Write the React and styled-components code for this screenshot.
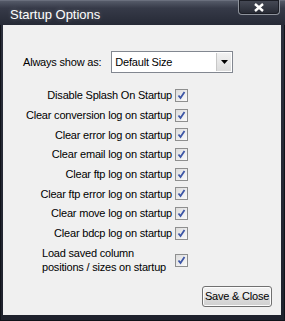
import React from 'react';
import styled, { createGlobalStyle } from 'styled-components';

const Global = createGlobalStyle`
  html, body { margin: 0; padding: 0; background: #1b1d27; }
  body { font-family: 'Liberation Sans', Arial, sans-serif; }
`;

const Window = styled.div({
  width: '285px',
  height: '321px',
  display: 'flex',
  flexDirection: 'column',
  background: 'linear-gradient(#2c303d, #1f222d)',
  boxShadow: 'inset 1px 0 0 #11131a, inset -1px 0 0 #11131a, inset 0 -1px 0 #11131a',
  overflow: 'hidden',
});

const TitleBar = styled.div({
  height: '24px',
  flexShrink: 0,
  display: 'flex',
  alignItems: 'flex-start',
  justifyContent: 'space-between',
  background: 'linear-gradient(#555a68 0, #363a48 30%, #262a36 100%)',
  borderTop: '1px solid #6a6f7d',
});

const Title = styled.span({
  fontFamily: "'Liberation Sans', Arial, sans-serif",
  fontSize: '13px',
  color: '#ffffff',
  marginLeft: '10px',
  marginTop: '6px',
  textShadow: '0 0 4px rgba(255,255,255,0.25)',
});

const CloseButton = styled.div({
  width: '40px',
  height: '14px',
  marginRight: '5px',
  marginTop: '-1px',
  display: 'flex',
  alignItems: 'center',
  justifyContent: 'center',
  border: '1px solid #8f939c',
  borderTop: 'none',
  borderRadius: '0 0 4px 4px',
  background: 'linear-gradient(#474b57, #262933)',
  boxShadow: 'inset 0 0 0 1px #1b1d25',
});

const Body = styled.div({
  flex: 1,
  margin: '0 4px 6px 3px',
  background: '#f0f0f0',
  fontSize: '11px',
  letterSpacing: '-0.2px',
  color: '#000',
  padding: '26px 9px 0 20px',
  display: 'flex',
  flexDirection: 'column',
});

const ShowRow = styled.div({
  display: 'flex',
  alignItems: 'center',
  gap: '10px',
  height: '22px',
});

const Select = styled.div({
  width: '122px',
  height: '22px',
  boxSizing: 'border-box',
  border: '1px solid #828790',
  background: '#fff',
  display: 'flex',
  alignItems: 'stretch',
});

const SelectText = styled.span({
  flex: 1,
  paddingLeft: '3px',
  display: 'flex',
  alignItems: 'center',
});

const SelectArrow = styled.div({
  width: '14px',
  margin: '1px',
  background: 'linear-gradient(#f2f2f2, #dcdcdc)',
  borderLeft: '1px solid #c8c8c8',
  display: 'flex',
  alignItems: 'center',
  justifyContent: 'center',
});

const CheckList = styled.div({
  width: '165px',
  marginTop: '12.5px',
  display: 'flex',
  flexDirection: 'column',
});

const CheckRow = styled.label({
  height: '19.7px',
  display: 'flex',
  alignItems: 'center',
  justifyContent: 'flex-end',
  gap: '3px',
  whiteSpace: 'nowrap',
});

const BoxFrame = styled.span({
  width: '13px',
  height: '13px',
  boxSizing: 'border-box',
  flexShrink: 0,
  border: '1px solid #8e8f8f',
  background: 'linear-gradient(135deg, #dcdcdc, #fbfbfb)',
  display: 'flex',
});

const LoadRow = styled.div({
  display: 'flex',
  alignItems: 'center',
  width: '165px',
  height: '28px',
  marginTop: '3px',
  paddingLeft: '19px',
  boxSizing: 'border-box',
  justifyContent: 'space-between',
});

const LoadText = styled.span({
  lineHeight: '14px',
});

const Footer = styled.div({
  display: 'flex',
  justifyContent: 'flex-end',
  marginTop: '11.5px',
});

const Button = styled.button({
  width: '70px',
  height: '21px',
  padding: 0,
  fontFamily: "'Liberation Sans', Arial, sans-serif",
  fontSize: '11px',
  letterSpacing: '-0.2px',
  color: '#000',
  border: '1px solid #707070',
  borderRadius: '3px',
  background: 'linear-gradient(#f2f2f2 0, #ebebeb 50%, #dddddd 51%, #cfcfcf 100%)',
  boxShadow: 'inset 0 0 0 1px #fcfcfc',
});

const Check = () => (
  <BoxFrame>
    <svg width="11" height="11" viewBox="0 0 11 11">
      <path d="M2.5 5.5 L4.5 8 L8.5 2" fill="none" stroke="#3d56a6" strokeWidth="1.8" />
    </svg>
  </BoxFrame>
);

const options = [
  'Disable Splash On Startup',
  'Clear conversion log on startup',
  'Clear error log on startup',
  'Clear email log on startup',
  'Clear ftp log on startup',
  'Clear ftp error log on startup',
  'Clear move log on startup',
  'Clear bdcp log on startup',
];

export default function App() {
  return (
    <Window>
      <Global />
      <TitleBar>
        <Title>Startup Options</Title>
        <CloseButton>
          <svg width="12" height="9" viewBox="0 0 12 9">
            <path d="M2 1 L10 8 M10 1 L2 8" stroke="#fff" strokeWidth="2.4" />
          </svg>
        </CloseButton>
      </TitleBar>
      <Body>
        <ShowRow>
          <span>Always show as:</span>
          <Select>
            <SelectText>Default Size</SelectText>
            <SelectArrow>
              <svg width="7" height="4" viewBox="0 0 7 4">
                <path d="M0 0 H7 L3.5 4 Z" fill="#000" />
              </svg>
            </SelectArrow>
          </Select>
        </ShowRow>
        <CheckList>
          {options.map((o) => (
            <CheckRow key={o}>
              {o}
              <Check />
            </CheckRow>
          ))}
        </CheckList>
        <LoadRow>
          <LoadText>
            Load saved column
            <br />
            positions / sizes on startup
          </LoadText>
          <Check />
        </LoadRow>
        <Footer>
          <Button>Save &amp; Close</Button>
        </Footer>
      </Body>
    </Window>
  );
}
